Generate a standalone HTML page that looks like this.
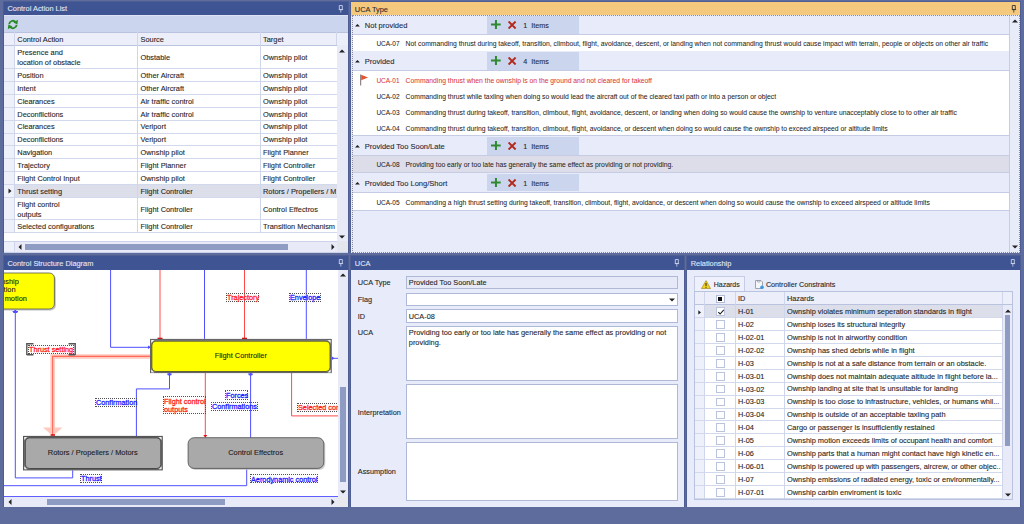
<!DOCTYPE html>
<html><head><meta charset="utf-8">
<style>
*{box-sizing:border-box;margin:0;padding:0}
html,body{width:1024px;height:524px;overflow:hidden;background:#5d6c9c;font-family:"Liberation Sans",sans-serif;color:#1e1e1e}
.a{position:absolute}
.hdr{position:absolute;height:13.5px;font-size:7.3px;line-height:13.5px;padding-left:4px;white-space:nowrap}
.t{position:absolute;white-space:nowrap;line-height:10px;-webkit-text-stroke:0.1px currentColor}
.g{font-size:7.35px;color:#262626}
.u{font-size:6.83px;color:#262626}
.d{font-size:7.4px;font-family:"Liberation Sans",sans-serif}
</style></head><body>
<div class="a" style="left:3px;top:1.2px;width:345.8px;height:252.0px;background:#4f5e92"></div>
<div class="a" style="left:350.4px;top:1.2px;width:670.6px;height:252.0px;background:#4f5e92"></div>
<div class="a" style="left:3px;top:255.4px;width:345.8px;height:252.0px;background:#4f5e92"></div>
<div class="a" style="left:350.4px;top:255.4px;width:334.6px;height:252.0px;background:#4f5e92"></div>
<div class="a" style="left:686.3px;top:255.4px;width:334.8px;height:252.0px;background:#4f5e92"></div>
<div class="a" style="left:3px;top:1.5px;width:345px;height:251.3px;background:#4b5b8f"></div>
<div class="a" style="left:3.9px;top:1.5px;width:344.1px;height:13.5px;background:#3f5593"></div>
<div class="t" style="left:7.5px;top:4.14px;font-size:7.4px;color:#e3e8f6;line-height:10px">Control Action List</div>
<svg class="a" style="left:338.2px;top:4.6px" width="6" height="8" viewBox="0 0 6 8"><path d="M1.3 0.5h3v4h-3z" fill="none" stroke="#c9d1ea" stroke-width="0.9"/><path d="M0.9 4.6h4.2" stroke="#c9d1ea" stroke-width="0.9"/><path d="M2.8 4.6v3" stroke="#c9d1ea" stroke-width="0.8"/></svg>
<div class="a" style="left:4px;top:15px;width:344px;height:17.2px;background:#ccd5ee;border-top:1px solid #dde3f5"></div>
<svg class="a" style="left:7px;top:18.6px" width="12" height="11" viewBox="0 0 12 11"><path d="M2.2 5.2 A3.7 3.7 0 0 1 8.6 3.0" fill="none" stroke="#2a8a2a" stroke-width="1.8"/><path d="M11 0.8 L10.4 5.4 L6.3 3.4 Z" fill="#2a8a2a"/><path d="M9.6 5.8 A3.7 3.7 0 0 1 3.2 8.0" fill="none" stroke="#2a8a2a" stroke-width="1.8"/><path d="M0.8 10.2 L1.4 5.6 L5.5 7.6 Z" fill="#2a8a2a"/></svg>
<div class="a" style="left:4px;top:32px;width:344px;height:220.8px;background:#ffffff"></div>
<div class="a" style="left:4px;top:32px;width:344px;height:13.8px;background:#eceff9;border-top:1px solid #b9c3e0;border-bottom:1px solid #b9c3e0"></div>
<div class="a" style="left:4px;top:45.8px;width:10.3px;height:186.8px;background:#eef1fa"></div>
<div class="a" style="left:4px;top:68.0px;width:333px;height:1px;background:#d3d9ec"></div>
<div class="a" style="left:4px;top:80.9px;width:333px;height:1px;background:#d3d9ec"></div>
<div class="a" style="left:4px;top:93.8px;width:333px;height:1px;background:#d3d9ec"></div>
<div class="a" style="left:4px;top:106.7px;width:333px;height:1px;background:#d3d9ec"></div>
<div class="a" style="left:4px;top:119.6px;width:333px;height:1px;background:#d3d9ec"></div>
<div class="a" style="left:4px;top:132.5px;width:333px;height:1px;background:#d3d9ec"></div>
<div class="a" style="left:4px;top:145.4px;width:333px;height:1px;background:#d3d9ec"></div>
<div class="a" style="left:4px;top:158.3px;width:333px;height:1px;background:#d3d9ec"></div>
<div class="a" style="left:4px;top:171.2px;width:333px;height:1px;background:#d3d9ec"></div>
<div class="a" style="left:4px;top:184.1px;width:333px;height:1px;background:#d3d9ec"></div>
<div class="a" style="left:14.5px;top:184.6px;width:322px;height:13.099999999999994px;background:#dcdeea"></div>
<svg class="a" style="left:8px;top:188px" width="4" height="6" viewBox="0 0 4 6"><path d="M0.5 0.5L3.5 3L0.5 5.5Z" fill="#222"/></svg>
<div class="a" style="left:4px;top:197.2px;width:333px;height:1px;background:#d3d9ec"></div>
<div class="a" style="left:4px;top:219.1px;width:333px;height:1px;background:#d3d9ec"></div>
<div class="a" style="left:4px;top:232.0px;width:333px;height:1px;background:#d3d9ec"></div>
<div class="a" style="left:14.3px;top:32px;width:1px;height:200.5px;background:#d0d6ea"></div>
<div class="a" style="left:137.4px;top:32px;width:1px;height:200.5px;background:#d0d6ea"></div>
<div class="a" style="left:260.4px;top:32px;width:1px;height:200.5px;background:#d0d6ea"></div>
<div class="a" style="left:336.2px;top:32px;width:1px;height:13.4px;background:#d0d6ea"></div>
<div class="t" style="left:17.3px;top:35.04px;font-size:7.4px;color:#262626;line-height:10px;">Control Action</div>
<div class="t" style="left:140.5px;top:35.04px;font-size:7.4px;color:#262626;line-height:10px;">Source</div>
<div class="t" style="left:263px;top:35.04px;font-size:7.4px;color:#262626;line-height:10px;">Target</div>
<div class="t" style="left:17.3px;top:47.64px;font-size:7.4px;color:#262626;line-height:10px;">Presence and</div>
<div class="t" style="left:17.3px;top:57.84px;font-size:7.4px;color:#262626;line-height:10px;">location of obstacle</div>
<div class="t" style="left:140.5px;top:52.84px;font-size:7.4px;color:#262626;line-height:10px;">Obstable</div>
<div class="t" style="left:263px;top:52.84px;font-size:7.4px;color:#262626;line-height:10px;width:73px;overflow:hidden">Ownship pilot</div>
<div class="t" style="left:17.3px;top:70.84px;font-size:7.4px;color:#262626;line-height:10px;">Position</div>
<div class="t" style="left:140.5px;top:70.84px;font-size:7.4px;color:#262626;line-height:10px;">Other Aircraft</div>
<div class="t" style="left:263px;top:70.84px;font-size:7.4px;color:#262626;line-height:10px;width:73px;overflow:hidden">Ownship pilot</div>
<div class="t" style="left:17.3px;top:83.74px;font-size:7.4px;color:#262626;line-height:10px;">Intent</div>
<div class="t" style="left:140.5px;top:83.74px;font-size:7.4px;color:#262626;line-height:10px;">Other Aircraft</div>
<div class="t" style="left:263px;top:83.74px;font-size:7.4px;color:#262626;line-height:10px;width:73px;overflow:hidden">Ownship pilot</div>
<div class="t" style="left:17.3px;top:96.64px;font-size:7.4px;color:#262626;line-height:10px;">Clearances</div>
<div class="t" style="left:140.5px;top:96.64px;font-size:7.4px;color:#262626;line-height:10px;">Air traffic control</div>
<div class="t" style="left:263px;top:96.64px;font-size:7.4px;color:#262626;line-height:10px;width:73px;overflow:hidden">Ownship pilot</div>
<div class="t" style="left:17.3px;top:109.54px;font-size:7.4px;color:#262626;line-height:10px;">Deconflictions</div>
<div class="t" style="left:140.5px;top:109.54px;font-size:7.4px;color:#262626;line-height:10px;">Air traffic control</div>
<div class="t" style="left:263px;top:109.54px;font-size:7.4px;color:#262626;line-height:10px;width:73px;overflow:hidden">Ownship pilot</div>
<div class="t" style="left:17.3px;top:122.44px;font-size:7.4px;color:#262626;line-height:10px;">Clearances</div>
<div class="t" style="left:140.5px;top:122.44px;font-size:7.4px;color:#262626;line-height:10px;">Veriport</div>
<div class="t" style="left:263px;top:122.44px;font-size:7.4px;color:#262626;line-height:10px;width:73px;overflow:hidden">Ownship pilot</div>
<div class="t" style="left:17.3px;top:135.34px;font-size:7.4px;color:#262626;line-height:10px;">Deconflictions</div>
<div class="t" style="left:140.5px;top:135.34px;font-size:7.4px;color:#262626;line-height:10px;">Veriport</div>
<div class="t" style="left:263px;top:135.34px;font-size:7.4px;color:#262626;line-height:10px;width:73px;overflow:hidden">Ownship pilot</div>
<div class="t" style="left:17.3px;top:148.24px;font-size:7.4px;color:#262626;line-height:10px;">Navigation</div>
<div class="t" style="left:140.5px;top:148.24px;font-size:7.4px;color:#262626;line-height:10px;">Ownship pilot</div>
<div class="t" style="left:263px;top:148.24px;font-size:7.4px;color:#262626;line-height:10px;width:73px;overflow:hidden">Flight Planner</div>
<div class="t" style="left:17.3px;top:161.14px;font-size:7.4px;color:#262626;line-height:10px;">Trajectory</div>
<div class="t" style="left:140.5px;top:161.14px;font-size:7.4px;color:#262626;line-height:10px;">Flight Planner</div>
<div class="t" style="left:263px;top:161.14px;font-size:7.4px;color:#262626;line-height:10px;width:73px;overflow:hidden">Flight Controller</div>
<div class="t" style="left:17.3px;top:174.04px;font-size:7.4px;color:#262626;line-height:10px;">Flight Control Input</div>
<div class="t" style="left:140.5px;top:174.04px;font-size:7.4px;color:#262626;line-height:10px;">Ownship pilot</div>
<div class="t" style="left:263px;top:174.04px;font-size:7.4px;color:#262626;line-height:10px;width:73px;overflow:hidden">Flight Controller</div>
<div class="t" style="left:17.3px;top:186.94px;font-size:7.4px;color:#262626;line-height:10px;">Thrust setting</div>
<div class="t" style="left:140.5px;top:186.94px;font-size:7.4px;color:#262626;line-height:10px;">Flight Controller</div>
<div class="t" style="left:263px;top:186.94px;font-size:7.4px;color:#262626;line-height:10px;width:73px;overflow:hidden">Rotors / Propellers / M</div>
<div class="t" style="left:17.3px;top:200.04px;font-size:7.4px;color:#262626;line-height:10px;">Flight control</div>
<div class="t" style="left:17.3px;top:210.24px;font-size:7.4px;color:#262626;line-height:10px;">outputs</div>
<div class="t" style="left:140.5px;top:204.59px;font-size:7.4px;color:#262626;line-height:10px;">Flight Controller</div>
<div class="t" style="left:263px;top:204.59px;font-size:7.4px;color:#262626;line-height:10px;width:73px;overflow:hidden">Control Effectros</div>
<div class="t" style="left:17.3px;top:221.94px;font-size:7.4px;color:#262626;line-height:10px;">Selected configurations</div>
<div class="t" style="left:140.5px;top:221.94px;font-size:7.4px;color:#262626;line-height:10px;">Flight Controller</div>
<div class="t" style="left:263px;top:221.94px;font-size:7.4px;color:#262626;line-height:10px;width:73px;overflow:hidden">Transition Mechanism</div>
<div class="a" style="left:336.5px;top:45.4px;width:11.5px;height:195.3px;background:#e8ebf7"></div>
<svg class="a" style="left:339px;top:49px" width="6" height="4"><path d="M0 3.5L3 0.5L6 3.5Z" fill="#222"/></svg>
<svg class="a" style="left:339px;top:234.5px" width="6" height="4"><path d="M0 0.5L3 3.5L6 0.5Z" fill="#222"/></svg>
<div class="a" style="left:4px;top:240.8px;width:333px;height:11.9px;background:#e8ebf7;border-top:1px solid #cbd2ea;border-bottom:1.4px solid #c9d0ea"></div>
<div class="a" style="left:4px;top:241.8px;width:10.5px;height:9.5px;background:#eef1fa;border-right:1px solid #cfd5ea"></div>
<div class="a" style="left:336.5px;top:240.8px;width:11.5px;height:12px;background:#e4e6ee;border-bottom:1.4px solid #c9d0ea"></div>
<div class="a" style="left:25.2px;top:243.7px;width:262.7px;height:6.2px;background:#8e9bc3"></div>
<svg class="a" style="left:17.8px;top:243.8px" width="4" height="6"><path d="M3.5 0L0.5 3L3.5 6Z" fill="#222"/></svg>
<svg class="a" style="left:330.5px;top:243.5px" width="4" height="6"><path d="M0.5 0L3.5 3L0.5 6Z" fill="#222"/></svg>
<div class="a" style="left:351.2px;top:2px;width:669.1px;height:250.6px;background:#e8ecfa"></div>
<div class="a" style="left:351.2px;top:2px;width:669.1px;height:13.5px;background:#f4c97e"></div>
<div class="t" style="left:354.8px;top:4.64px;font-size:7.4px;color:#2b2b2b;line-height:10px">UCA Type</div>
<svg class="a" style="left:1010.6px;top:4.6px" width="6" height="8" viewBox="0 0 6 8"><path d="M1.3 0.5h3v4h-3z" fill="none" stroke="#333" stroke-width="0.9"/><path d="M0.9 4.6h4.2" stroke="#333" stroke-width="0.9"/><path d="M2.8 4.6v3" stroke="#333" stroke-width="0.8"/></svg>
<div class="a" style="left:352.5px;top:15.4px;width:656.7px;height:19.0px;background:#e7ebfa"></div>
<div class="a" style="left:487.2px;top:16.1px;width:91.5px;height:17.7px;background:#ccd5ee"></div>
<div class="a" style="left:352.5px;top:33.8px;width:656.7px;height:1.3px;background:#c5cce4"></div>
<svg class="a" style="left:354.9px;top:23.50px" width="5" height="3"><path d="M0 2.4L2.45 0L4.9 2.4Z" fill="#1e1e1e"/></svg>
<div class="t" style="left:364.8px;top:21px;font-size:7.5px;color:#2a2a3a;line-height:10px;">Not provided</div>
<svg class="a" style="left:491px;top:19.8px" width="10" height="10" viewBox="0 0 10 10"><path d="M0 4.6h9.7M4.95 0v9" stroke="#2f8a30" stroke-width="2"/></svg>
<svg class="a" style="left:508.4px;top:20.8px" width="9" height="8" viewBox="0 0 9 8"><path d="M0.6 0.5L7.6 7.5M7.6 0.5L0.6 7.5" stroke="#b3291c" stroke-width="1.9"/></svg>
<div class="t" style="left:523.2px;top:21px;font-size:7.2px;color:#2a2a2a;line-height:10px;">1</div>
<div class="t" style="left:531.3px;top:21px;font-size:7.2px;color:#2a2a2a;line-height:10px;">Items</div>
<div class="a" style="left:352.5px;top:35.1px;width:656.7px;height:16.100000000000005px;background:#ffffff"></div>
<div class="a" style="left:352.5px;top:50.6px;width:656.7px;height:1px;background:#c5cce4"></div>
<div class="t" style="left:376.4px;top:39px;font-size:6.5px;color:#262626;line-height:10px;-webkit-text-stroke:0.05px currentColor">UCA-07</div>
<div class="t" style="left:405.6px;top:39px;font-size:6.79px;color:#262626;line-height:10px;-webkit-text-stroke:0.05px currentColor">Not commanding thrust during takeoff, transition, climbout, flight, avoidance, descent, or landing when not commanding thrust would cause impact with terrain, people or objects on other air traffic</div>
<div class="a" style="left:352.5px;top:51.2px;width:656.7px;height:19.299999999999997px;background:#e7ebfa"></div>
<div class="a" style="left:487.2px;top:51.900000000000006px;width:91.5px;height:17.999999999999996px;background:#ccd5ee"></div>
<div class="a" style="left:352.5px;top:69.9px;width:656.7px;height:1.3px;background:#c5cce4"></div>
<svg class="a" style="left:354.9px;top:60.00px" width="5" height="3"><path d="M0 2.4L2.45 0L4.9 2.4Z" fill="#1e1e1e"/></svg>
<div class="t" style="left:364.8px;top:57px;font-size:7.5px;color:#2a2a3a;line-height:10px;">Provided</div>
<svg class="a" style="left:491px;top:56.3px" width="10" height="10" viewBox="0 0 10 10"><path d="M0 4.6h9.7M4.95 0v9" stroke="#2f8a30" stroke-width="2"/></svg>
<svg class="a" style="left:508.4px;top:57.3px" width="9" height="8" viewBox="0 0 9 8"><path d="M0.6 0.5L7.6 7.5M7.6 0.5L0.6 7.5" stroke="#b3291c" stroke-width="1.9"/></svg>
<div class="t" style="left:523.2px;top:57px;font-size:7.2px;color:#2a2a2a;line-height:10px;">4</div>
<div class="t" style="left:531.3px;top:57px;font-size:7.2px;color:#2a2a2a;line-height:10px;">Items</div>
<div class="a" style="left:352.5px;top:71.2px;width:656.7px;height:64.8px;background:#ffffff"></div>
<div class="a" style="left:352.5px;top:135.4px;width:656.7px;height:1px;background:#c5cce4"></div>
<div class="t" style="left:376.4px;top:76px;font-size:6.5px;color:#d8393c;line-height:10px;-webkit-text-stroke:0.05px currentColor">UCA-01</div>
<div class="t" style="left:405.6px;top:76px;font-size:6.79px;color:#d8393c;line-height:10px;-webkit-text-stroke:0.05px currentColor">Commanding thrust when the ownship is on the ground and not cleared for takeoff</div>
<svg class="a" style="left:360px;top:74px" width="9" height="12" viewBox="0 0 9 12"><path d="M0.7 0.5V11.5" stroke="#7a6a6a" stroke-width="1"/><path d="M1.2 0.8L8 3.6L1.2 6.2Z" fill="#e2552f"/></svg>
<div class="t" style="left:376.4px;top:92px;font-size:6.5px;color:#262626;line-height:10px;-webkit-text-stroke:0.05px currentColor">UCA-02</div>
<div class="t" style="left:405.6px;top:92px;font-size:6.79px;color:#262626;line-height:10px;-webkit-text-stroke:0.05px currentColor">Commanding thrust while taxiing when doing so would lead the aircraft out of the cleared taxi path or into a person or object</div>
<div class="t" style="left:376.4px;top:108px;font-size:6.5px;color:#262626;line-height:10px;-webkit-text-stroke:0.05px currentColor">UCA-03</div>
<div class="t" style="left:405.6px;top:108px;font-size:6.79px;color:#262626;line-height:10px;-webkit-text-stroke:0.05px currentColor">Commanding thrust during takeoff, transition, climbout, flight, avoidance, descent, or landing when doing so would cause the ownship to venture unacceptably close to to other air traffic</div>
<div class="t" style="left:376.4px;top:124px;font-size:6.5px;color:#262626;line-height:10px;-webkit-text-stroke:0.05px currentColor">UCA-04</div>
<div class="t" style="left:405.6px;top:124px;font-size:6.79px;color:#262626;line-height:10px;-webkit-text-stroke:0.05px currentColor">Commanding thrust during takeoff, transition, climbout, flight, avoidance, or descent when doing so would cause the ownship to exceed airspeed or altitude limits</div>
<div class="a" style="left:352.5px;top:136.0px;width:656.7px;height:19.599999999999994px;background:#e7ebfa"></div>
<div class="a" style="left:487.2px;top:136.7px;width:91.5px;height:18.299999999999994px;background:#ccd5ee"></div>
<div class="a" style="left:352.5px;top:155.0px;width:656.7px;height:1.3px;background:#c5cce4"></div>
<svg class="a" style="left:354.9px;top:144.50px" width="5" height="3"><path d="M0 2.4L2.45 0L4.9 2.4Z" fill="#1e1e1e"/></svg>
<div class="t" style="left:364.8px;top:142px;font-size:7.5px;color:#2a2a3a;line-height:10px;">Provided Too Soon/Late</div>
<svg class="a" style="left:491px;top:140.8px" width="10" height="10" viewBox="0 0 10 10"><path d="M0 4.6h9.7M4.95 0v9" stroke="#2f8a30" stroke-width="2"/></svg>
<svg class="a" style="left:508.4px;top:141.8px" width="9" height="8" viewBox="0 0 9 8"><path d="M0.6 0.5L7.6 7.5M7.6 0.5L0.6 7.5" stroke="#b3291c" stroke-width="1.9"/></svg>
<div class="t" style="left:523.2px;top:142px;font-size:7.2px;color:#2a2a2a;line-height:10px;">1</div>
<div class="t" style="left:531.3px;top:142px;font-size:7.2px;color:#2a2a2a;line-height:10px;">Items</div>
<div class="a" style="left:352.5px;top:156.29999999999998px;width:656.7px;height:16.600000000000012px;background:#dcdde9"></div>
<div class="a" style="left:352.5px;top:172.3px;width:656.7px;height:1px;background:#c5cce4"></div>
<div class="t" style="left:376.4px;top:160px;font-size:6.5px;color:#262626;line-height:10px;-webkit-text-stroke:0.05px currentColor">UCA-08</div>
<div class="t" style="left:405.6px;top:160px;font-size:6.79px;color:#262626;line-height:10px;-webkit-text-stroke:0.05px currentColor">Providing too early or too late has generally the same effect as providing or not providing.</div>
<div class="a" style="left:352.5px;top:172.9px;width:656.7px;height:19.19999999999999px;background:#e7ebfa"></div>
<div class="a" style="left:487.2px;top:173.6px;width:91.5px;height:17.899999999999988px;background:#ccd5ee"></div>
<div class="a" style="left:352.5px;top:191.5px;width:656.7px;height:1.3px;background:#c5cce4"></div>
<svg class="a" style="left:354.9px;top:181.70px" width="5" height="3"><path d="M0 2.4L2.45 0L4.9 2.4Z" fill="#1e1e1e"/></svg>
<div class="t" style="left:364.8px;top:179px;font-size:7.5px;color:#2a2a3a;line-height:10px;">Provided Too Long/Short</div>
<svg class="a" style="left:491px;top:178.0px" width="10" height="10" viewBox="0 0 10 10"><path d="M0 4.6h9.7M4.95 0v9" stroke="#2f8a30" stroke-width="2"/></svg>
<svg class="a" style="left:508.4px;top:179.0px" width="9" height="8" viewBox="0 0 9 8"><path d="M0.6 0.5L7.6 7.5M7.6 0.5L0.6 7.5" stroke="#b3291c" stroke-width="1.9"/></svg>
<div class="t" style="left:523.2px;top:179px;font-size:7.2px;color:#2a2a2a;line-height:10px;">1</div>
<div class="t" style="left:531.3px;top:179px;font-size:7.2px;color:#2a2a2a;line-height:10px;">Items</div>
<div class="a" style="left:352.5px;top:192.79999999999998px;width:656.7px;height:17.8px;background:#ffffff"></div>
<div class="a" style="left:352.5px;top:210.0px;width:656.7px;height:1px;background:#c5cce4"></div>
<div class="t" style="left:376.4px;top:198px;font-size:6.5px;color:#262626;line-height:10px;-webkit-text-stroke:0.05px currentColor">UCA-05</div>
<div class="t" style="left:405.6px;top:198px;font-size:6.79px;color:#262626;line-height:10px;-webkit-text-stroke:0.05px currentColor">Commanding a high thrust setting during takeoff, transition, climbout, flight, avoidance, or descent when doing so would cause the ownship to exceed airspeed or altitude limits</div>
<div class="a" style="left:1009.2px;top:15.4px;width:10px;height:237px;background:#e8ebf8;border-left:1px solid #c5cce4"></div>
<svg class="a" style="left:1012px;top:18.5px" width="6" height="4"><path d="M0 3.5L3 0.5L6 3.5Z" fill="#222"/></svg>
<svg class="a" style="left:1012px;top:245px" width="6" height="4"><path d="M0 0.5L3 3.5L6 0.5Z" fill="#222"/></svg>
<div class="a" style="left:352px;top:15px;width:667.5px;height:237.5px;border:1px dotted #8a8a9a"></div>
<div class="a" style="left:3.9px;top:256px;width:344.1px;height:13.5px;background:#3f5593"></div>
<div class="t" style="left:7.5px;top:258.64px;font-size:7.4px;color:#e3e8f6;line-height:10px">Control Structure Diagram</div>
<svg class="a" style="left:338.4px;top:259.2px" width="6" height="8" viewBox="0 0 6 8"><path d="M1.3 0.5h3v4h-3z" fill="none" stroke="#c9d1ea" stroke-width="0.9"/><path d="M0.9 4.6h4.2" stroke="#c9d1ea" stroke-width="0.9"/><path d="M2.8 4.6v3" stroke="#c9d1ea" stroke-width="0.8"/></svg>
<div class="a" style="left:4px;top:269.5px;width:333.5px;height:227.5px;background:#fff"></div>
<svg class="a" style="left:4px;top:269.5px" width="333.5" height="227.5" viewBox="4 269.5 333.5 227.5"><rect x="-40" y="274" width="95.8" height="36" rx="5" fill="#9a9a9a" opacity="0.6"/><rect x="-40" y="272.5" width="94.4" height="36" rx="5" fill="#ffff00" stroke="#555" stroke-width="0.8"/><path d="M15.3 310 V477.4 H72.7 V469.8" fill="none" stroke="#4f4fff" stroke-width="1"/><path d="M110.6 269.5 V346.8 H150" fill="none" stroke="#4f4fff" stroke-width="1"/><path d="M204.5 269.5 V338.4" fill="none" stroke="#4f4fff" stroke-width="1"/><path d="M306.3 269.5 V338.4" fill="none" stroke="#4f4fff" stroke-width="1"/><path d="M331.7 357.8 H338" fill="none" stroke="#4f4fff" stroke-width="1"/><path d="M169.5 372.5 V388.4 H136.4 V435.5" fill="none" stroke="#4f4fff" stroke-width="1"/><path d="M250.6 437.2 V372.5" fill="none" stroke="#4f4fff" stroke-width="1"/><path d="M246.7 468 V485.2 H3" fill="none" stroke="#4f4fff" stroke-width="1"/><path d="M3 496.1 H338" fill="none" stroke="#4f4fff" stroke-width="1"/><path d="M160 269.5 V338.4" fill="none" stroke="#ff4a4a" stroke-width="1"/><path d="M244.5 269.5 V338.4" fill="none" stroke="#ff4a4a" stroke-width="1"/><path d="M205.3 372.5 V436" fill="none" stroke="#ff4a4a" stroke-width="1"/><path d="M291.6 372.5 V415.4 H338" fill="none" stroke="#ff4a4a" stroke-width="1"/><path d="M12.6 311 H18 M15.3 309.5 L13.5 312 H17.1Z" stroke="#4f4fff" stroke-width="1" fill="#4f4fff"/><path d="M148 345 L151 346.8 L148 348.6Z" fill="#4f4fff"/><path d="M332 356 L334.5 357.8 L332 359.6Z" fill="#4f4fff"/><path d="M167 373.5 H172 M169.5 372.3 L167.8 374.5 H171.2Z" stroke="#4f4fff" stroke-width="0.8" fill="#4f4fff"/><path d="M248 373.5 H253 M250.6 372.3 L248.9 374.5 H252.3Z" stroke="#4f4fff" stroke-width="0.8" fill="#4f4fff"/><path d="M157.5 338 H162.5" stroke="#d01010" stroke-width="1.6"/><path d="M242 338 H247" stroke="#d01010" stroke-width="1.6"/><path d="M203.3 434.5 L207.3 434.5 L205.3 437.3Z" fill="#e81010"/><path d="M150 355.9 H52.6 V428" fill="none" stroke="#ffc9bd" stroke-width="4.5"/><path d="M43 427 H62.5 L52.8 435.5Z" fill="#ffc9bd"/><path d="M150 355.9 H52.6 V435" fill="none" stroke="#ff6a5a" stroke-width="1.1"/><path d="M50.6 434.5 H55" stroke="#e01010" stroke-width="1.6"/><rect x="150.6" y="339" width="180.6" height="33" fill="#8a8a8a" stroke="#666" stroke-width="1.2"/><rect x="151.9" y="340.7" width="178.1" height="30.3" rx="4" fill="#ffff00" stroke="#333" stroke-width="0.7"/><path d="M151.2 339.6 h3 l-3 3Z" fill="#f4f4f4"/><path d="M330.6 339.6 h-3 l3 3Z" fill="#f4f4f4"/><path d="M151.2 371.9 h3 l-3 -3Z" fill="#f4f4f4"/><path d="M330.6 371.9 h-3 l3 -3Z" fill="#f4f4f4"/><rect x="23.6" y="436" width="138.6" height="33.3" fill="#7d7d7d" stroke="#555" stroke-width="1.2"/><rect x="25.3" y="437.4" width="135.5" height="30.6" rx="4" fill="#a9a9a9" stroke="#2a2a2a" stroke-width="0.7"/><path d="M24.2 436.6 h3 l-3 3Z" fill="#eeeeee"/><path d="M161.6 436.6 h-3 l3 3Z" fill="#eeeeee"/><path d="M24.2 468.7 h3 l-3 -3Z" fill="#eeeeee"/><path d="M161.6 468.7 h-3 l3 -3Z" fill="#eeeeee"/><rect x="189.6" y="438.7" width="135.7" height="30.7" rx="6" fill="#bdbdbd" opacity="0.7"/><rect x="188.1" y="437.2" width="135.7" height="30.7" rx="6" fill="#a9a9a9" stroke="#4a4a4a" stroke-width="0.8"/></svg>
<div class="a" style="left:4px;top:269.5px;width:60px;height:45px;overflow:hidden"><div class="t" style="left:-65.2px;top:7.24px;width:80px;text-align:right;font-size:7.4px;line-height:10px;color:#222">Ownship</div><div class="t" style="left:-68.5px;top:15.84px;width:80px;text-align:right;font-size:7.4px;line-height:10px;color:#222">Position</div><div class="t" style="left:-57.1px;top:24.44px;width:80px;text-align:right;font-size:7.4px;line-height:10px;color:#222">Ownship motion</div></div>
<div class="t" style="left:214.7px;top:351.34px;font-size:7.4px;color:#1a1a1a;line-height:10px;">Flight Controller</div>
<div class="t" style="left:47.8px;top:448.34px;font-size:7.4px;color:#1a1a1a;line-height:10px;">Rotors / Propellers / Motors</div>
<div class="t" style="left:228.2px;top:448.34px;font-size:7.4px;color:#1a1a1a;line-height:10px;">Control Effectros</div>
<div class="a" style="left:28.2px;top:345px;width:45.8px;height:8.5px;border:1px dotted #505050"></div>
<div class="t" style="left:29.2px;top:344.69px;font-size:8.1px;line-height:10px;color:#ff1e1e;transform:scaleX(0.9);transform-origin:0 0;-webkit-text-stroke:0.3px #ff1e1e">Thrust setting</div>
<svg class="a" style="left:26px;top:343px" width="50" height="12.5" viewBox="0 0 50 12.5"><path d="M0.8 12 V0.8 H7.5 M42.5 0.8 H49.2 V12 M0.8 11.7 H7.5 M42.5 11.7 H49.2" fill="none" stroke="#555" stroke-width="1.4"/></svg>
<div class="a" style="left:226.2px;top:292.9px;width:33.0px;height:9.100000000000023px;border:1px dotted #505050"></div>
<div class="t" style="left:227.2px;top:293.19px;font-size:8.1px;line-height:10px;color:#ff1e1e;transform:scaleX(0.9);transform-origin:0 0;-webkit-text-stroke:0.3px #ff1e1e">Trajectory</div>
<div class="a" style="left:289.2px;top:293px;width:31.69999999999999px;height:9px;border:1px dotted #505050"></div>
<div class="t" style="left:290.2px;top:293.19px;font-size:8.1px;line-height:10px;color:#2020ff;transform:scaleX(0.9);transform-origin:0 0;-webkit-text-stroke:0.3px #2020ff">Envelope</div>
<div class="a" style="left:94.6px;top:398.3px;width:42.70000000000002px;height:9.0px;border:1px dotted #505050"></div>
<div class="t" style="left:95.6px;top:398.49px;font-size:8.1px;line-height:10px;color:#2020ff;transform:scaleX(0.9);transform-origin:0 0;-webkit-text-stroke:0.3px #2020ff">Confirmation</div>
<div class="a" style="left:162.7px;top:396.3px;width:43.0px;height:17.5px;border:1px dotted #505050"></div>
<div class="t" style="left:163.7px;top:396.89px;font-size:8.1px;line-height:10px;color:#ff1e1e;transform:scaleX(0.9);transform-origin:0 0;-webkit-text-stroke:0.3px #ff1e1e">Flight control</div>
<div class="t" style="left:163.7px;top:404.89px;font-size:8.1px;line-height:10px;color:#ff1e1e;transform:scaleX(0.9);transform-origin:0 0;-webkit-text-stroke:0.3px #ff1e1e">outputs</div>
<div class="a" style="left:224.8px;top:390.4px;width:23.399999999999977px;height:9.400000000000034px;border:1px dotted #505050"></div>
<div class="t" style="left:225.8px;top:390.99px;font-size:8.1px;line-height:10px;color:#2020ff;transform:scaleX(0.9);transform-origin:0 0;-webkit-text-stroke:0.3px #2020ff">Forces</div>
<div class="a" style="left:211.1px;top:402.1px;width:46.900000000000006px;height:9.199999999999989px;border:1px dotted #505050"></div>
<div class="t" style="left:212.1px;top:402.49px;font-size:8.1px;line-height:10px;color:#2020ff;transform:scaleX(0.9);transform-origin:0 0;-webkit-text-stroke:0.3px #2020ff">Confirmations</div>
<div class="a" style="left:296.9px;top:402.5px;width:41px;height:9px;overflow:hidden"><div class="a" style="left:0;top:0;width:60px;height:9px;border:1px dotted #505050"></div><div class="t" style="left:1px;top:0.2px;font-size:8.1px;line-height:10px;color:#ff1e1e;transform:scaleX(0.9);transform-origin:0 0;-webkit-text-stroke:0.3px #ff1e1e">Selected configurations</div></div>
<div class="a" style="left:80.3px;top:473.5px;width:21.700000000000003px;height:9.0px;border:1px dotted #505050"></div>
<div class="t" style="left:81.3px;top:473.69px;font-size:8.1px;line-height:10px;color:#2020ff;transform:scaleX(0.9);transform-origin:0 0;-webkit-text-stroke:0.3px #2020ff">Thrust</div>
<div class="a" style="left:250.2px;top:474.3px;width:68.19999999999999px;height:9.199999999999989px;border:1px dotted #505050"></div>
<div class="t" style="left:251.2px;top:474.69px;font-size:8.1px;line-height:10px;color:#2020ff;transform:scaleX(0.9);transform-origin:0 0;-webkit-text-stroke:0.3px #2020ff">Aerodynamic control</div>
<div class="a" style="left:337.5px;top:269.5px;width:10.3px;height:237px;background:#e8ebf7"></div>
<div class="a" style="left:339.8px;top:386.5px;width:6.2px;height:95.4px;background:#8e9cc4"></div>
<svg class="a" style="left:339.6px;top:272.8px" width="6" height="4"><path d="M0 3.5L3 0.5L6 3.5Z" fill="#222"/></svg>
<svg class="a" style="left:339.6px;top:489.5px" width="6" height="4"><path d="M0 0.5L3 3.5L6 0.5Z" fill="#222"/></svg>
<div class="a" style="left:4px;top:497px;width:333.5px;height:9.6px;background:#e8ebf7"></div>
<div class="a" style="left:337.5px;top:497px;width:10.3px;height:9.6px;background:#e9e9ee"></div>
<div class="a" style="left:46.9px;top:498.9px;width:178.3px;height:5.8px;background:#8e9bc3"></div>
<svg class="a" style="left:7.8px;top:498.8px" width="4" height="6"><path d="M3.5 0L0.5 3L3.5 6Z" fill="#222"/></svg>
<svg class="a" style="left:331px;top:498.8px" width="4" height="6"><path d="M0.5 0L3.5 3L0.5 6Z" fill="#222"/></svg>
<div class="a" style="left:351.2px;top:256px;width:333.1px;height:13.5px;background:#3f5593"></div>
<div class="t" style="left:354.8px;top:258.64px;font-size:7.4px;color:#e3e8f6;line-height:10px">UCA</div>
<svg class="a" style="left:674.4px;top:259.2px" width="6" height="8" viewBox="0 0 6 8"><path d="M1.3 0.5h3v4h-3z" fill="none" stroke="#c9d1ea" stroke-width="0.9"/><path d="M0.9 4.6h4.2" stroke="#c9d1ea" stroke-width="0.9"/><path d="M2.8 4.6v3" stroke="#c9d1ea" stroke-width="0.8"/></svg>
<div class="a" style="left:351.2px;top:269.5px;width:333.1px;height:237px;background:#e8ebfa"></div>
<div class="t" style="left:357.8px;top:278.27px;font-size:7.3px;color:#262626;line-height:10px;">UCA Type</div>
<div class="t" style="left:357.8px;top:294.87px;font-size:7.3px;color:#262626;line-height:10px;">Flag</div>
<div class="t" style="left:357.8px;top:311.57px;font-size:7.3px;color:#262626;line-height:10px;">ID</div>
<div class="t" style="left:357.8px;top:327.97px;font-size:7.3px;color:#262626;line-height:10px;">UCA</div>
<div class="t" style="left:357.8px;top:408.27px;font-size:7.3px;color:#262626;line-height:10px;">Interpretation</div>
<div class="t" style="left:357.8px;top:467.07px;font-size:7.3px;color:#262626;line-height:10px;">Assumption</div>
<div class="a" style="left:405.7px;top:276.1px;width:272.3px;height:13.399999999999977px;background:#e6eaf8;border:1px solid #b0b8d8"></div>
<div class="a" style="left:405.7px;top:292.6px;width:272.3px;height:13.299999999999955px;background:#fff;border:1px solid #b0b8d8"></div>
<div class="a" style="left:405.7px;top:308.9px;width:272.3px;height:13.800000000000011px;background:#fff;border:1px solid #b0b8d8"></div>
<div class="a" style="left:405.7px;top:325.7px;width:272.3px;height:55.10000000000002px;background:#fff;border:1px solid #b0b8d8"></div>
<div class="a" style="left:405.7px;top:384.2px;width:272.3px;height:55.19999999999999px;background:#fff;border:1px solid #b0b8d8"></div>
<div class="a" style="left:405.7px;top:442.4px;width:272.3px;height:58.80000000000001px;background:#fff;border:1px solid #b0b8d8"></div>
<div class="t" style="left:408.8px;top:278.27px;font-size:7.3px;color:#262626;line-height:10px;">Provided Too Soon/Late</div>
<svg class="a" style="left:668.5px;top:297.8px" width="6" height="4"><path d="M0 0.5L3 3.5L6 0.5Z" fill="#222"/></svg>
<div class="t" style="left:408.8px;top:311.57px;font-size:7.3px;color:#262626;line-height:10px;">UCA-08</div>
<div class="t" style="left:408.8px;top:328.2px;font-size:7.4px;line-height:9.9px;color:#262626">Providing too early or too late has generally the same effect as providing or not<br>providing.</div>
<div class="a" style="left:687.1px;top:256px;width:333.2px;height:13.5px;background:#3f5593"></div>
<div class="t" style="left:690.7px;top:258.64px;font-size:7.4px;color:#e3e8f6;line-height:10px">Relationship</div>
<svg class="a" style="left:1010.3px;top:259.2px" width="6" height="8" viewBox="0 0 6 8"><path d="M1.3 0.5h3v4h-3z" fill="none" stroke="#c9d1ea" stroke-width="0.9"/><path d="M0.9 4.6h4.2" stroke="#c9d1ea" stroke-width="0.9"/><path d="M2.8 4.6v3" stroke="#c9d1ea" stroke-width="0.8"/></svg>
<div class="a" style="left:687.1px;top:269.5px;width:333.2px;height:237px;background:#e8ebfa"></div>
<div class="a" style="left:693.7px;top:276.3px;width:51.7px;height:15.2px;background:#eef1fb;border:1px solid #c5cce4;border-bottom:none"></div>
<svg class="a" style="left:701px;top:279.5px" width="10" height="9" viewBox="0 0 10 9"><path d="M5 0.6 L9.5 8.5 H0.5Z" fill="#f3d21c" stroke="#9a7a10" stroke-width="0.6"/><path d="M5 3V6M5 6.8V7.8" stroke="#222" stroke-width="1"/></svg>
<div class="t" style="left:713.7px;top:279.97px;font-size:7.0px;color:#262626;line-height:10px;">Hazards</div>
<svg class="a" style="left:755px;top:280px" width="9" height="9" viewBox="0 0 9 9"><path d="M0.5 0.5H6L7.5 2V8.5H0.5Z" fill="#f4f6fa" stroke="#8a90a0" stroke-width="0.8"/><path d="M2.5 0.5V2H5V0.5" fill="none" stroke="#8a90a0" stroke-width="0.6"/><circle cx="7" cy="7.3" r="1.8" fill="#3a9ae0"/></svg>
<div class="t" style="left:765.9px;top:279.91px;font-size:7.2px;color:#262626;line-height:10px;">Controller Constraints</div>
<div class="a" style="left:694.4px;top:290.8px;width:318.30000000000007px;height:209.09999999999997px;background:#fff;border:1px solid #b9c2de"></div>
<div class="a" style="left:695.4px;top:291.8px;width:316.30000000000007px;height:13.199999999999989px;background:#eceff9;border-bottom:1px solid #b9c2de"></div>
<div class="a" style="left:695.4px;top:305px;width:10px;height:193.89999999999998px;background:#eef1fa"></div>
<div class="a" style="left:704.6px;top:304.9px;width:298px;height:12.907px;background:#dcdeea"></div>
<svg class="a" style="left:698px;top:310.1px" width="4" height="5"><path d="M0.3 0.2L3 2.4L0.3 4.6Z" fill="#222"/></svg>
<div class="a" style="left:695.4px;top:317.20699999999994px;width:307.1px;height:1px;background:#d3d9ec"></div>
<div class="a" style="left:715.9px;top:307.29999999999995px;width:8.7px;height:8.7px;background:#fff;border:1px solid #bcc3dc"></div>
<svg class="a" style="left:716.5px;top:308.3px" width="8" height="8" viewBox="0 0 8 8"><path d="M1.3 4.2L3.1 6L6.8 1.8" fill="none" stroke="#1e1e1e" stroke-width="1.1"/></svg>
<div class="t" style="left:738px;top:307.07px;font-size:7.3px;color:#262626;line-height:10px;">H-01</div>
<div class="t" style="left:787px;top:307.00px;font-size:7.41px;line-height:10px;color:#262626;width:214px;overflow:hidden">Ownship violates minimum seperation standards in flight</div>
<div class="a" style="left:695.4px;top:330.1139999999999px;width:307.1px;height:1px;background:#d3d9ec"></div>
<div class="a" style="left:715.9px;top:320.20699999999994px;width:8.7px;height:8.7px;background:#fff;border:1px solid #bcc3dc"></div>
<div class="t" style="left:738px;top:319.98px;font-size:7.3px;color:#262626;line-height:10px;">H-02</div>
<div class="t" style="left:787px;top:319.91px;font-size:7.41px;line-height:10px;color:#262626;width:214px;overflow:hidden">Ownship loses its structural integrity</div>
<div class="a" style="left:695.4px;top:343.02099999999996px;width:307.1px;height:1px;background:#d3d9ec"></div>
<div class="a" style="left:715.9px;top:333.114px;width:8.7px;height:8.7px;background:#fff;border:1px solid #bcc3dc"></div>
<div class="t" style="left:738px;top:332.88px;font-size:7.3px;color:#262626;line-height:10px;">H-02-01</div>
<div class="t" style="left:787px;top:332.81px;font-size:7.41px;line-height:10px;color:#262626;width:214px;overflow:hidden">Ownship is not in airworthy condition</div>
<div class="a" style="left:695.4px;top:355.92799999999994px;width:307.1px;height:1px;background:#d3d9ec"></div>
<div class="a" style="left:715.9px;top:346.02099999999996px;width:8.7px;height:8.7px;background:#fff;border:1px solid #bcc3dc"></div>
<div class="t" style="left:738px;top:345.79px;font-size:7.3px;color:#262626;line-height:10px;">H-02-02</div>
<div class="t" style="left:787px;top:345.72px;font-size:7.41px;line-height:10px;color:#262626;width:214px;overflow:hidden">Ownship has shed debris while in flight</div>
<div class="a" style="left:695.4px;top:368.8349999999999px;width:307.1px;height:1px;background:#d3d9ec"></div>
<div class="a" style="left:715.9px;top:358.92799999999994px;width:8.7px;height:8.7px;background:#fff;border:1px solid #bcc3dc"></div>
<div class="t" style="left:738px;top:358.70px;font-size:7.3px;color:#262626;line-height:10px;">H-03</div>
<div class="t" style="left:787px;top:358.63px;font-size:7.41px;line-height:10px;color:#262626;width:214px;overflow:hidden">Ownship is not at a safe distance from terrain or an obstacle.</div>
<div class="a" style="left:695.4px;top:381.7419999999999px;width:307.1px;height:1px;background:#d3d9ec"></div>
<div class="a" style="left:715.9px;top:371.8349999999999px;width:8.7px;height:8.7px;background:#fff;border:1px solid #bcc3dc"></div>
<div class="t" style="left:738px;top:371.61px;font-size:7.3px;color:#262626;line-height:10px;">H-03-01</div>
<div class="t" style="left:787px;top:371.53px;font-size:7.41px;line-height:10px;color:#262626;width:214px;overflow:hidden">Ownship does not maintain adequate altitude in flight before la...</div>
<div class="a" style="left:695.4px;top:394.64899999999994px;width:307.1px;height:1px;background:#d3d9ec"></div>
<div class="a" style="left:715.9px;top:384.74199999999996px;width:8.7px;height:8.7px;background:#fff;border:1px solid #bcc3dc"></div>
<div class="t" style="left:738px;top:384.51px;font-size:7.3px;color:#262626;line-height:10px;">H-03-02</div>
<div class="t" style="left:787px;top:384.44px;font-size:7.41px;line-height:10px;color:#262626;width:214px;overflow:hidden">Ownship landing at site that is unsuitable for landing</div>
<div class="a" style="left:695.4px;top:407.5559999999999px;width:307.1px;height:1px;background:#d3d9ec"></div>
<div class="a" style="left:715.9px;top:397.64899999999994px;width:8.7px;height:8.7px;background:#fff;border:1px solid #bcc3dc"></div>
<div class="t" style="left:738px;top:397.42px;font-size:7.3px;color:#262626;line-height:10px;">H-03-03</div>
<div class="t" style="left:787px;top:397.35px;font-size:7.41px;line-height:10px;color:#262626;width:214px;overflow:hidden">Ownship is too close to infrastructure, vehicles, or humans whil...</div>
<div class="a" style="left:695.4px;top:420.4629999999999px;width:307.1px;height:1px;background:#d3d9ec"></div>
<div class="a" style="left:715.9px;top:410.5559999999999px;width:8.7px;height:8.7px;background:#fff;border:1px solid #bcc3dc"></div>
<div class="t" style="left:738px;top:410.33px;font-size:7.3px;color:#262626;line-height:10px;">H-03-04</div>
<div class="t" style="left:787px;top:410.26px;font-size:7.41px;line-height:10px;color:#262626;width:214px;overflow:hidden">Ownship is outside of an acceptable taxiing path</div>
<div class="a" style="left:695.4px;top:433.36999999999995px;width:307.1px;height:1px;background:#d3d9ec"></div>
<div class="a" style="left:715.9px;top:423.46299999999997px;width:8.7px;height:8.7px;background:#fff;border:1px solid #bcc3dc"></div>
<div class="t" style="left:738px;top:423.23px;font-size:7.3px;color:#262626;line-height:10px;">H-04</div>
<div class="t" style="left:787px;top:423.16px;font-size:7.41px;line-height:10px;color:#262626;width:214px;overflow:hidden">Cargo or passenger is insufficiently restained</div>
<div class="a" style="left:695.4px;top:446.27699999999993px;width:307.1px;height:1px;background:#d3d9ec"></div>
<div class="a" style="left:715.9px;top:436.36999999999995px;width:8.7px;height:8.7px;background:#fff;border:1px solid #bcc3dc"></div>
<div class="t" style="left:738px;top:436.14px;font-size:7.3px;color:#262626;line-height:10px;">H-05</div>
<div class="t" style="left:787px;top:436.07px;font-size:7.41px;line-height:10px;color:#262626;width:214px;overflow:hidden">Ownship motion exceeds limits of occupant health and comfort</div>
<div class="a" style="left:695.4px;top:459.1839999999999px;width:307.1px;height:1px;background:#d3d9ec"></div>
<div class="a" style="left:715.9px;top:449.27699999999993px;width:8.7px;height:8.7px;background:#fff;border:1px solid #bcc3dc"></div>
<div class="t" style="left:738px;top:449.05px;font-size:7.3px;color:#262626;line-height:10px;">H-06</div>
<div class="t" style="left:787px;top:448.98px;font-size:7.41px;line-height:10px;color:#262626;width:214px;overflow:hidden">Ownship parts that a human might contact have high kinetic en...</div>
<div class="a" style="left:695.4px;top:472.09099999999995px;width:307.1px;height:1px;background:#d3d9ec"></div>
<div class="a" style="left:715.9px;top:462.18399999999997px;width:8.7px;height:8.7px;background:#fff;border:1px solid #bcc3dc"></div>
<div class="t" style="left:738px;top:461.95px;font-size:7.3px;color:#262626;line-height:10px;">H-06-01</div>
<div class="t" style="left:787px;top:461.88px;font-size:7.41px;line-height:10px;color:#262626;width:214px;overflow:hidden">Ownship is powered up with passengers, aircrew, or other objec...</div>
<div class="a" style="left:695.4px;top:484.99799999999993px;width:307.1px;height:1px;background:#d3d9ec"></div>
<div class="a" style="left:715.9px;top:475.09099999999995px;width:8.7px;height:8.7px;background:#fff;border:1px solid #bcc3dc"></div>
<div class="t" style="left:738px;top:474.86px;font-size:7.3px;color:#262626;line-height:10px;">H-07</div>
<div class="t" style="left:787px;top:474.79px;font-size:7.41px;line-height:10px;color:#262626;width:214px;overflow:hidden">Ownship emissions of radiated energy, toxic or environmentally...</div>
<div class="a" style="left:695.4px;top:497.9049999999999px;width:307.1px;height:1px;background:#d3d9ec"></div>
<div class="a" style="left:715.9px;top:487.99799999999993px;width:8.7px;height:8.7px;background:#fff;border:1px solid #bcc3dc"></div>
<div class="t" style="left:738px;top:487.77px;font-size:7.3px;color:#262626;line-height:10px;">H-07-01</div>
<div class="t" style="left:787px;top:487.70px;font-size:7.41px;line-height:10px;color:#262626;width:214px;overflow:hidden">Ownship carbin enviroment is toxic</div>
<div class="a" style="left:704.2px;top:291.8px;width:1px;height:207.09999999999997px;background:#cfd5ea"></div>
<div class="a" style="left:735.1px;top:291.8px;width:1px;height:207.09999999999997px;background:#cfd5ea"></div>
<div class="a" style="left:784.2px;top:291.8px;width:1px;height:207.09999999999997px;background:#cfd5ea"></div>
<div class="a" style="left:1002.4px;top:291.8px;width:1px;height:12.300000000000011px;background:#cfd5ea"></div>
<div class="a" style="left:716px;top:294.6px;width:8.6px;height:8.4px;background:#fff;border:1px solid #b4bbd6"></div>
<div class="a" style="left:718.4px;top:297px;width:3.8px;height:3.6px;background:#111"></div>
<div class="t" style="left:738px;top:294.17px;font-size:7.3px;color:#262626;line-height:10px;">ID</div>
<div class="t" style="left:787px;top:294.17px;font-size:7.3px;color:#262626;line-height:10px;">Hazards</div>
<div class="a" style="left:1002.4px;top:305px;width:9.3px;height:193.89999999999998px;background:#e8ebf7;border-left:1px solid #cfd5ea"></div>
<div class="a" style="left:1004.8px;top:315.3px;width:5.6px;height:131px;background:#8e9cc4"></div>
<svg class="a" style="left:1004.6px;top:308.5px" width="6" height="4"><path d="M0 3.5L3 0.5L6 3.5Z" fill="#222"/></svg>
<svg class="a" style="left:1004.6px;top:493.3px" width="6" height="4"><path d="M0 0.5L3 3.5L6 0.5Z" fill="#222"/></svg>
</body></html>
